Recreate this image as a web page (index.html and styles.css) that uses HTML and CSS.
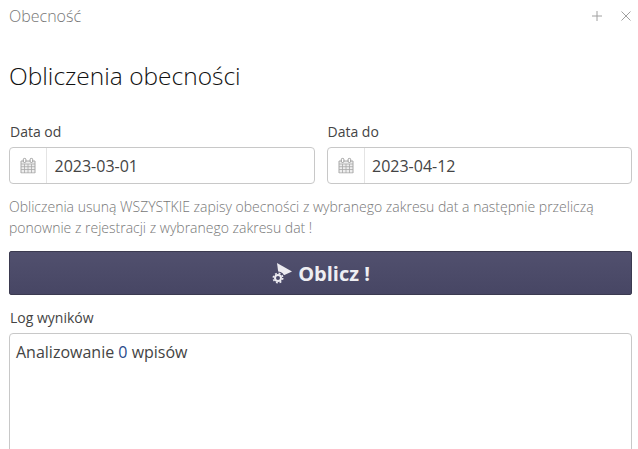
FILE: index.html
```html
<!DOCTYPE html>
<html lang="pl">
<head>
    <meta charset="UTF-8">
    <meta name="viewport" content="width=device-width, initial-scale=1.0">
    <title>Obecność</title>
    <link rel="stylesheet" href="styles.css">
</head>
<body>

    <div class="topbar">
        <span class="topbar-title">Obecność</span>
        <div class="topbar-tools">
            <svg width="12" height="12" viewBox="0 0 12 12"><path d="M6 1v10M1 6h10" stroke="#a0a0a0" fill="none"/></svg>
            <svg width="12" height="12" viewBox="0 0 12 12"><path d="M1.5 1.5l9 9M10.5 1.5l-9 9" stroke="#a0a0a0" fill="none"/></svg>
        </div>
    </div>

    <h1>Obliczenia obecności</h1>

    <div class="date-row">
        <div class="field">
            <label>Data od</label>
            <div class="date-input">
                <span class="date-addon">
                    <svg width="16" height="17" viewBox="0 0 16 16"><use href="#cal"/></svg>
                </span>
                <span class="date-value">2023-03-01</span>
            </div>
        </div>
        <div class="field">
            <label>Data do</label>
            <div class="date-input">
                <span class="date-addon">
                    <svg width="16" height="17" viewBox="0 0 16 16"><use href="#cal"/></svg>
                </span>
                <span class="date-value">2023-04-12</span>
            </div>
        </div>
    </div>

    <svg class="defs" width="0" height="0">
        <symbol id="cal" viewBox="0 0 16 16">
            <path d="M1 3.5h14v12h-14z" fill="#eeeeee" stroke="#a8a8a8"/>
            <path d="M1 6.5h14M1 9.2h14M1 12h14M4.5 6.5v9M8 6.5v9M11.5 6.5v9" stroke="#a8a8a8" stroke-width="0.8" fill="none"/>
            <rect x="3.3" y="0.8" width="2.6" height="4.2" rx="1.3" fill="#fff" stroke="#9c9c9c"/>
            <rect x="10.1" y="0.8" width="2.6" height="4.2" rx="1.3" fill="#fff" stroke="#9c9c9c"/>
        </symbol>
    </svg>

    <p class="hint">Obliczenia usuną WSZYSTKIE zapisy obecności z wybranego zakresu dat a następnie przeliczą ponownie z rejestracji z wybranego zakresu dat !</p>

    <button class="calc-btn" type="button">
        <svg width="22" height="22" viewBox="0 0 22 22">
            <path d="M6 1l15 8.5-13 6z" fill="#ecebf0"/>
            <circle cx="7" cy="16" r="6.6" fill="#4b4a69"/>
            <circle cx="7" cy="16" r="3" fill="none" stroke="#ecebf0" stroke-width="2"/>
            <circle cx="7" cy="16" r="4.7" fill="none" stroke="#ecebf0" stroke-width="1.6" stroke-dasharray="1.85 1.85"/>
        </svg>
        <span>Oblicz !</span>
    </button>

    <label class="log-label">Log wyników</label>
    <div class="log-box">Analizowanie <span class="num">0</span> wpisów</div>

</body>
</html>
```

FILE: styles.css
```css
html, body {
    height: 449px;
    overflow: hidden;
}
body {
    margin: 0;
    padding: 0 6px 0 9px;
    font-family: "Open Sans", sans-serif;
    font-size: 14px;
    color: #333;
    background: #fff;
}
.topbar {
    display: flex;
    justify-content: space-between;
    align-items: center;
    height: 32px;
}
.topbar-title {
    font-size: 16px;
    font-weight: 300;
    color: #777;
}
.topbar-tools {
    display: flex;
    gap: 17px;
}
h1 {
    margin: 26px 0 0;
    font-size: 24.5px;
    line-height: 36px;
    font-weight: 300;
    color: #111;
}
.date-row {
    display: flex;
    gap: 12px;
    margin-top: 28px;
}
.field {
    flex: 1;
}
label {
    display: block;
    padding-left: 1px;
    font-size: 14px;
    line-height: 20px;
    color: #444;
}
.date-input {
    display: flex;
    height: 37px;
    margin-top: 5px;
    border: 1px solid #c8c8c8;
    border-radius: 4px;
    box-sizing: border-box;
}
.date-addon {
    display: flex;
    align-items: center;
    justify-content: center;
    width: 36px;
    border-right: 1px solid #e4e4e4;
}
.date-value {
    padding-left: 7.5px;
    font-size: 16px;
    line-height: 36px;
    color: #444;
}
.defs {
    position: absolute;
}
.hint {
    margin: 12px 0 0;
    font-size: 14px;
    line-height: 21px;
    font-weight: 300;
    color: #777;
}
.calc-btn {
    display: flex;
    align-items: center;
    justify-content: center;
    gap: 5px;
    width: 100%;
    height: 44px;
    margin-top: 13px;
    padding: 0;
    border: 1px solid #3b3a50;
    border-radius: 2px;
    background: linear-gradient(#51506e, #474664);
    color: #eeeef2;
    font-family: inherit;
    font-size: 20px;
    font-weight: 700;
}
.log-label {
    margin-top: 13px;
}
.log-box {
    height: 160px;
    margin-top: 5px;
    padding: 7px 6px;
    border: 1px solid #c8c8c8;
    border-radius: 4px;
    font-size: 16px;
    line-height: 22px;
    color: #444;
}
.num {
    color: #2a4a8a;
}
```
